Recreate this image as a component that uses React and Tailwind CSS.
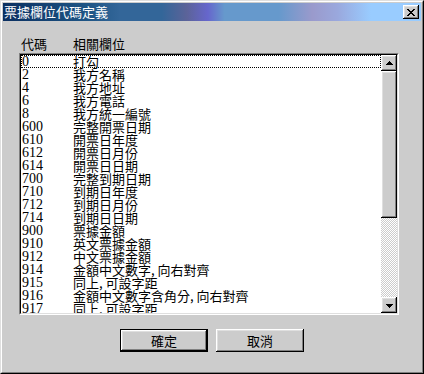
import React from "react";

const rows = [
  ["0", "打勾"],
  ["2", "我方名稱"],
  ["4", "我方地址"],
  ["6", "我方電話"],
  ["8", "我方統一編號"],
  ["600", "完整開票日期"],
  ["610", "開票日年度"],
  ["612", "開票日月份"],
  ["614", "開票日日期"],
  ["700", "完整到期日期"],
  ["710", "到期日年度"],
  ["712", "到期日月份"],
  ["714", "到期日日期"],
  ["900", "票據金額"],
  ["910", "英文票據金額"],
  ["912", "中文票據金額"],
  ["914", "金額中文數字, 向右對齊"],
  ["915", "同上, 可設字距"],
  ["916", "金額中文數字含角分, 向右對齊"],
  ["917", "同上, 可設字距"],
];

const bevel =
  "shadow-[inset_-1px_-1px_#000,inset_1px_1px_#fff,inset_-2px_-2px_#808080,inset_2px_2px_#dfdfdf]";

function CloseGlyph() {
  const px = [
    "11000011",
    "01100110",
    "00111100",
    "00011000",
    "00111100",
    "01100110",
    "11000011",
  ];
  return (
    <svg width="8" height="7" viewBox="0 0 8 7" shapeRendering="crispEdges">
      {px.flatMap((r, y) =>
        r.split("").map((c, x) =>
          c === "1" ? <rect key={x + "-" + y} x={x} y={y} width="1" height="1" fill="#000" /> : null
        )
      )}
    </svg>
  );
}

function Arrow({ down }) {
  return (
    <svg width="7" height="4" viewBox="0 0 7 4" shapeRendering="crispEdges">
      {down ? (
        <>
          <rect x="0" y="0" width="7" height="1" fill="#000" />
          <rect x="1" y="1" width="5" height="1" fill="#000" />
          <rect x="2" y="2" width="3" height="1" fill="#000" />
          <rect x="3" y="3" width="1" height="1" fill="#000" />
        </>
      ) : (
        <>
          <rect x="3" y="0" width="1" height="1" fill="#000" />
          <rect x="2" y="1" width="3" height="1" fill="#000" />
          <rect x="1" y="2" width="5" height="1" fill="#000" />
          <rect x="0" y="3" width="7" height="1" fill="#000" />
        </>
      )}
    </svg>
  );
}

export default function App() {
  return (
    <div className="w-[424px] h-[374px] border border-t-[#dfdfdf] border-l-[#dfdfdf] border-r-black border-b-black bg-[#cccccc] font-['Liberation_Serif','Noto_Sans_CJK_TC',serif] text-black">
      <div className="w-full h-full border border-t-white border-l-white border-r-[#808080] border-b-[#808080] p-px flex flex-col">
        {/* Title bar */}
        <div className="h-[18px] flex items-center justify-between pl-[1px] pr-[2px] bg-[linear-gradient(to_right,#0a2f60_0%,#1e5585_20%,#336699_28%,#336699_38%,#5c6399_44%,#6666cc_49%,#6699cc_53%,#6699cc_66%,#9a9acc_74%,#9aa8dd_80%,#99ccff_88%,#99ccff_100%)]">
          <span className="text-white text-[13px] leading-[16px] font-['Noto_Sans_CJK_TC',sans-serif]">
            票據欄位代碼定義
          </span>
          <div className={"w-[16px] h-[14px] bg-[#cccccc] flex items-center justify-center " + bevel}>
            <CloseGlyph />
          </div>
        </div>

        {/* Header */}
        <div className="mt-[15px] ml-[18px] flex text-[13px] leading-[15px] font-['Noto_Sans_CJK_TC',sans-serif]">
          <span className="w-[52px]">代碼</span>
          <span>相關欄位</span>
        </div>

        {/* List box */}
        <div className="mt-[2px] ml-[16px] w-[380px] h-[262px] border border-t-[#808080] border-l-[#808080] border-r-white border-b-white">
          <div className="w-full h-full border border-t-black border-l-black border-r-[#dfdfdf] border-b-[#dfdfdf] bg-white flex">
            <div className="flex-1 overflow-hidden text-[13px]">
              {rows.map(([code, name], i) => (
                <div
                  key={code}
                  className={
                    "h-[13px] leading-[13px] flex whitespace-nowrap " +
                    (i === 0 ? "outline-1 outline-dotted outline-black -outline-offset-1" : "")
                  }
                >
                  <span className="w-[52px] pl-px text-[14px]">{code}</span>
                  <span className="font-['Noto_Sans_CJK_TC',sans-serif]">{name}</span>
                </div>
              ))}
            </div>
            {/* Scrollbar */}
            <div className="w-[16px] flex flex-col">
              <div className={"h-[16px] bg-[#cccccc] flex items-center justify-center pb-px " + bevel}>
                <Arrow />
              </div>
              <div className={"h-[147px] bg-[#cccccc] " + bevel}></div>
              <div className="flex-1 bg-[repeating-conic-gradient(#ffffff_0_25%,#cccccc_0_50%)] bg-[length:2px_2px]"></div>
              <div className={"h-[16px] bg-[#cccccc] flex items-center justify-center pt-px " + bevel}>
                <Arrow down />
              </div>
            </div>
          </div>
        </div>

        {/* Buttons */}
        <div className="mt-[14px] flex justify-center gap-[8px] font-['Noto_Sans_CJK_TC',sans-serif] text-[13px]">
          <div className="w-[88px] h-[23px] border border-black">
            <div className={"w-full h-full flex items-center justify-center bg-[#cccccc] " + bevel}>
              確定
            </div>
          </div>
          <div className={"w-[88px] h-[23px] flex items-center justify-center bg-[#cccccc] " + bevel}>
            取消
          </div>
        </div>
      </div>
    </div>
  );
}
